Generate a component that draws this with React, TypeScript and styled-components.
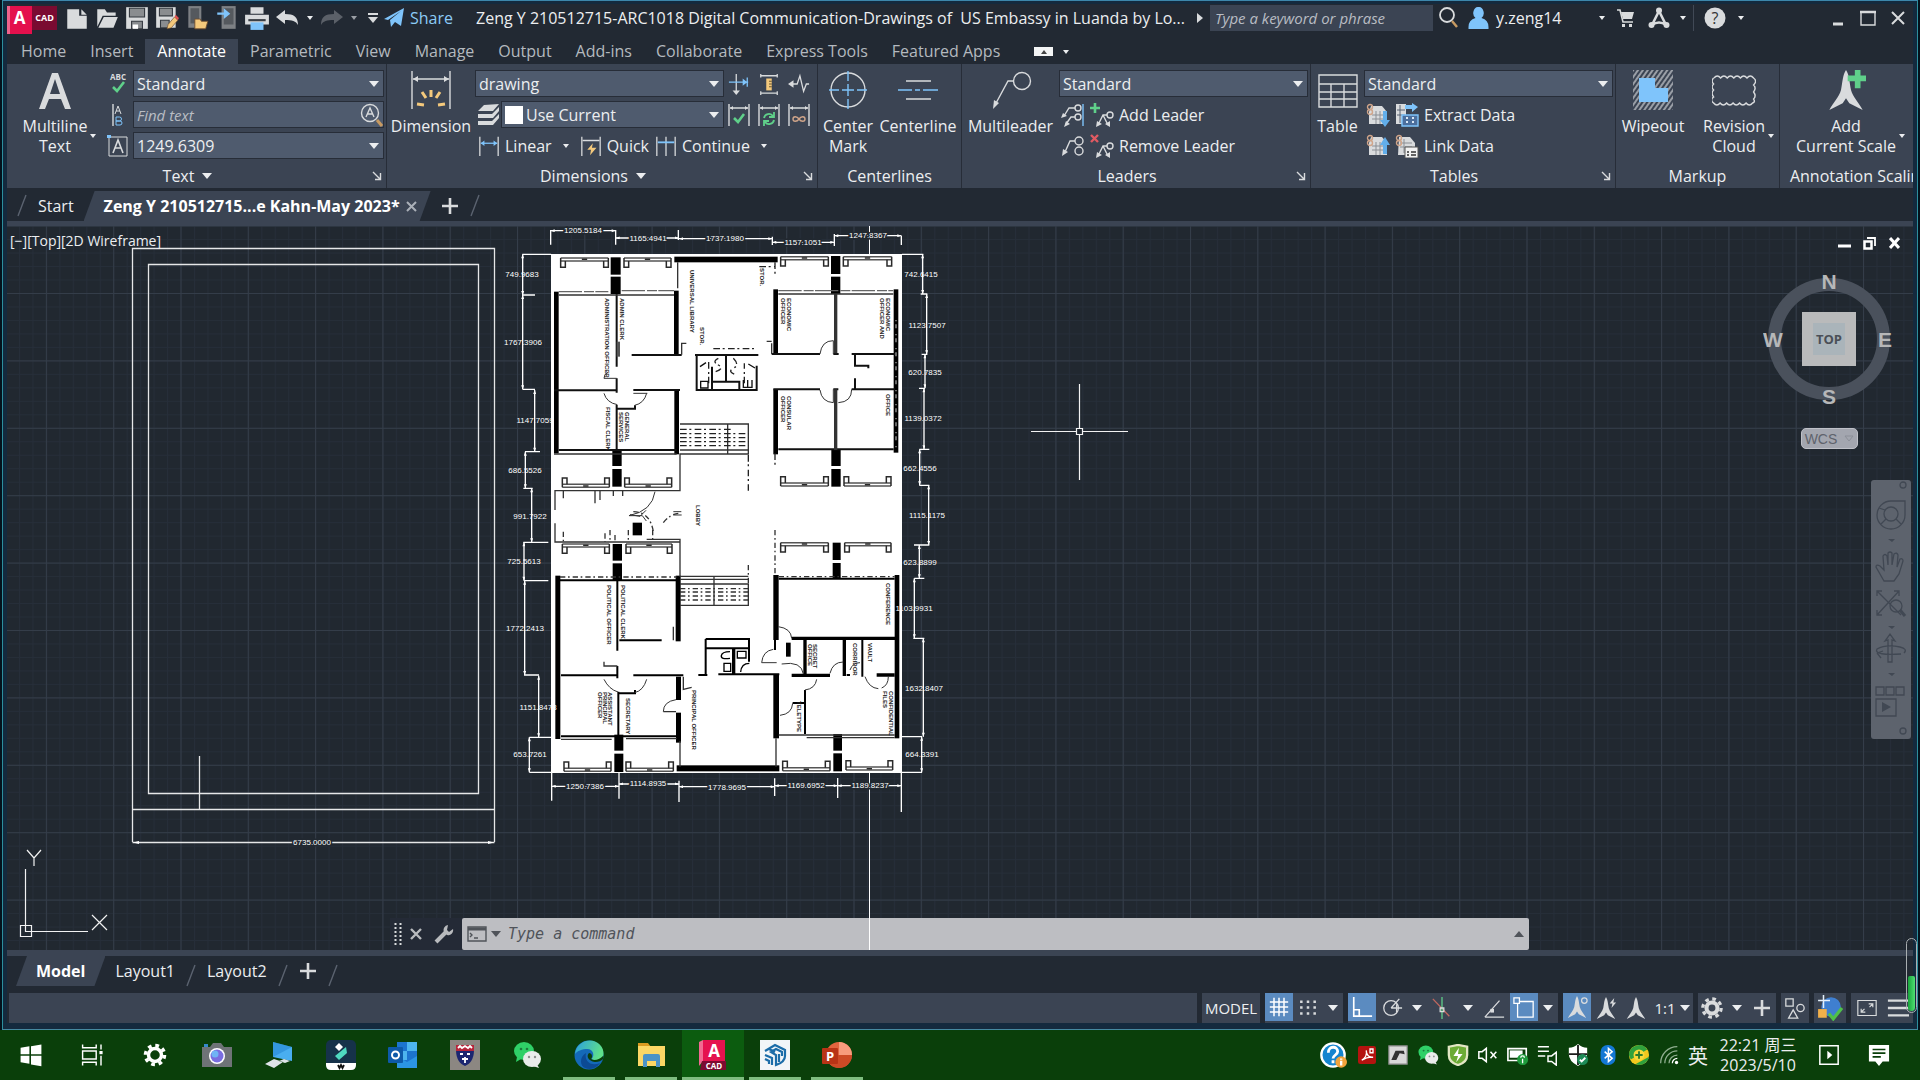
import React from "react";
import styled, { createGlobalStyle, css } from "styled-components";

const c = {
  dark: "#222933",
  panel: "#3b4453",
  field: "#4f5b6e",
  edge: "#272d38",
  text: "#eceef0",
  dim: "#b4b9bf",
  icon: "#d9dbdd",
  blue: "#7fc4fb",
  green: "#5fd08a",
  amber: "#f4c97c",
  task: "#0a3f0a",
};

const Global = createGlobalStyle`
  * { box-sizing: border-box; }
  html, body { margin: 0; background: #04121c; }
  body { font-family: "Open Sans", "Noto Sans", "Noto Sans CJK SC", sans-serif; font-size: 16px; color: ${c.text}; overflow: hidden; }
  button, select, input { font: inherit; color: inherit; border: 0; margin: 0; padding: 0; background: none; border-radius: 0; outline: none; }
`;

/* ---------- shell ---------- */
const Desktop = styled.div`
  display: flex;
  flex-direction: column;
  height: 100vh;
`;
const Window = styled.div`
  flex: 1;
  min-height: 0;
  display: flex;
  flex-direction: column;
  margin: 0 2px;
  padding: 3px 4px 6px;
  border: 1px solid #2c8f9e;
  border-top-color: #3d87ab;
  border-bottom-color: #4689a0;
  background: #142a3e;
`;
const Client = styled.div`
  flex: 1;
  min-height: 0;
  display: flex;
  flex-direction: column;
  background: ${c.dark};
  overflow: hidden;
`;
const Icon = styled.svg`
  display: block;
  flex: none;
  fill: none;
  stroke: ${c.icon};
  stroke-width: 1.4;
`;
const Caret = styled.span<{ $up?: boolean; $small?: boolean; $color?: string }>`
  flex: none;
  width: 0;
  height: 0;
  border: ${(p) => (p.$small ? 3 : 5)}px solid transparent;
  ${(p) =>
    p.$up
      ? css`border-top: 0; border-bottom: ${p.$small ? 4 : 6}px solid ${p.$color || c.text};`
      : css`border-bottom: 0; border-top: ${p.$small ? 4 : 6}px solid ${p.$color || c.text};`}
`;

/* ---------- title bar ---------- */
const TitleBar = styled.header`
  display: flex;
  align-items: center;
  height: 35px;
  padding-bottom: 8px;
  flex: none;
`;
const Slot = styled.button<{ $w?: number }>`
  display: flex;
  align-items: center;
  justify-content: center;
  flex: none;
  width: ${(p) => p.$w || 30}px;
  height: 26px;
`;
const AppBadge = styled.button`
  display: flex;
  align-items: center;
  width: 50px;
  height: 24px;
  margin-right: 5px;
  background: #7a0b31;
  flex: none;
`;
const BadgeA = styled.span`
  width: 25px;
  height: 28px;
  line-height: 24px;
  background: linear-gradient(90deg, #f0628b 3px, #e4104d 3px);
  color: #fff;
  font-weight: 700;
  font-size: 17px;
  text-align: center;
  align-self: flex-start;
`;
const BadgeCad = styled.span`
  flex: 1;
  font-size: 9px;
  font-weight: 700;
  color: #fff;
  text-align: center;
`;
const Share = styled.button`
  display: flex;
  align-items: center;
  gap: 6px;
  width: 74px;
  color: #8ccbf7;
  flex: none;
`;
const FileTitle = styled.h1`
  margin: 0 0 0 18px;
  flex: 1;
  min-width: 0;
  font-size: 16px;
  line-height: 24px;
  font-weight: 400;
  white-space: pre;
`;
const KeySearch = styled.input`
  width: 223px;
  height: 26px;
  padding: 0 5px;
  background: ${c.panel};
  font-size: 15px;
  font-style: italic;
  flex: none;
  &::placeholder { color: #b9bdc3; opacity: 1; }
`;
const User = styled.button`
  display: flex;
  align-items: center;
  gap: 7px;
  width: 136px;
  padding-left: 5px;
  flex: none;
`;
const Rule = styled.span`
  width: 1px;
  height: 26px;
  background: #414956;
`;
const TitleGap = styled.span`
  flex: 0 0 77px;
`;

/* ---------- ribbon ---------- */
const RibbonTabs = styled.nav`
  display: flex;
  height: 25px;
  flex: none;
  padding-left: 2px;
`;
const RibbonTab = styled.button<{ $on?: boolean }>`
  padding: 0 12px;
  height: 25px;
  line-height: 25px;
  color: ${(p) => (p.$on ? "#fff" : c.dim)};
  background: ${(p) => (p.$on ? c.panel : "none")};
`;
const TabMenu = styled.button`
  display: flex;
  align-items: center;
  gap: 10px;
  margin-left: 22px;
`;
const TabMenuBox = styled.span`
  width: 19px;
  height: 9px;
  display: grid;
  place-items: center;
  background: #f3f4f5;
`;
const Ribbon = styled.div`
  display: flex;
  height: 124px;
  flex: none;
  background: ${c.panel};
  overflow: hidden;
`;
const Panel = styled.section<{ $w: number }>`
  flex: 0 0 ${(p) => p.$w}px;
  display: flex;
  flex-direction: column;
  padding-top: 6px;
  border-right: 1px solid ${c.edge};
`;
const PanelBody = styled.div`
  display: flex;
  height: 95px;
`;
const PanelTitle = styled.h2`
  display: flex;
  align-items: center;
  margin: 0;
  height: 22px;
  font-size: 16px;
  font-weight: 400;
  white-space: nowrap;
`;
const TitleText = styled.span`
  flex: 1;
  display: flex;
  align-items: center;
  justify-content: center;
  gap: 8px;
`;
const Launcher = styled.button`
  width: 18px;
  display: grid;
  place-items: center;
`;
const Big = styled.button<{ $w: number }>`
  width: ${(p) => p.$w}px;
  height: 92px;
  display: flex;
  flex-direction: column;
  align-items: center;
  gap: 6px;
  flex: none;
  line-height: 20px;
`;
const BigText = styled.span<{ $menu?: boolean }>`
  display: flex;
  align-items: center;
  gap: 3px;
  padding-left: ${(p) => (p.$menu ? 9 : 0)}px;
  white-space: pre;
  text-align: center;
`;
const Rows = styled.div`
  display: flex;
  flex-direction: column;
  gap: 4px;
`;
const Row = styled.div`
  display: flex;
  align-items: center;
  height: 27px;
`;
const Field = styled.label<{ $w: number; $swatch?: boolean }>`
  position: relative;
  display: flex;
  align-items: center;
  width: ${(p) => p.$w}px;
  height: 27px;
  background: ${c.field};
  border: 1px solid ${c.edge};
  padding-left: ${(p) => (p.$swatch ? 3 : 0)}px;
  & > select, & > input { appearance: none; flex: 1; min-width: 0; height: 25px; padding: 0 3px; }
  & > input { font-size: 15px; font-style: italic; }
  & > input::placeholder { color: #b9bdc3; opacity: 1; }
`;
const FieldCaret = styled(Caret)`
  position: absolute;
  right: 4px;
  top: 10px;
  pointer-events: none;
`;
const Swatch = styled.span`
  width: 18px;
  height: 18px;
  background: #fff;
`;
const Tool = styled.button<{ $w?: number }>`
  display: flex;
  align-items: center;
  gap: 5px;
  height: 27px;
  width: ${(p) => (p.$w ? p.$w + "px" : "auto")};
  justify-content: ${(p) => (p.$w ? "center" : "flex-start")};
  padding: 0 ${(p) => (p.$w ? 0 : 3)}px;
  white-space: nowrap;
`;

/* ---------- tab strips ---------- */
const Strip = styled.nav<{ $h: number }>`
  display: flex;
  align-items: center;
  flex: none;
  height: ${(p) => p.$h}px;
  padding-left: 9px;
`;
const StripTab = styled.button<{ $on?: boolean; $bottom?: boolean }>`
  display: flex;
  align-items: center;
  gap: 6px;
  height: 30px;
  align-self: ${(p) => (p.$bottom ? "flex-start" : "flex-end")};
  padding: 0 10px;
  white-space: nowrap;
  ${(p) =>
    p.$on &&
    css`
      padding: 0 ${p.$bottom ? 20 : 14}px 0 20px;
      background: ${c.panel};
      color: #fff;
      font-weight: 700;
      clip-path: polygon(11px 0, 100% 0, calc(100% - 11px) 100%, 0 100%);
    `}
`;
const Slash = () => (
  <Icon width="12" height="24" viewBox="0 0 12 24">
    <path d="M2 23 10 2" stroke="#5b6370" />
  </Icon>
);
const Band = styled.div<{ $h: number }>`
  flex: none;
  height: ${(p) => p.$h}px;
  background: ${c.panel};
`;

/* ---------- canvas ---------- */
const Canvas = styled.main`
  position: relative;
  flex: 1;
  min-height: 0;
  overflow: hidden;
`;
const Scene = styled.svg`
  display: block;
  width: 100%;
  height: 100%;
`;
const ViewLabel = styled.div`
  position: absolute;
  left: 3px;
  top: 4px;
  font-size: 14px;
  line-height: 22px;
`;
const ViewButtons = styled.div`
  position: absolute;
  right: 6px;
  top: 4px;
  display: flex;
`;
const ViewCube = styled.div`
  position: absolute;
  right: 18px;
  top: 42px;
`;
const Wcs = styled.button`
  position: absolute;
  right: 55px;
  top: 202px;
  width: 57px;
  height: 21px;
  border-radius: 5px;
  background: #a3a6af;
  border: 1px solid #bfc1c8;
  color: #5f636c;
  font: 14px "Liberation Sans", Arial, sans-serif;
  display: flex;
  align-items: center;
  justify-content: center;
  gap: 7px;
`;
const NavBar = styled.div`
  position: absolute;
  right: 2px;
  top: 254px;
  width: 40px;
  height: 259px;
  border-radius: 3px;
  background: #5d636d;
`;
const CommandLine = styled.div`
  position: absolute;
  left: 383px;
  right: 384px;
  bottom: 0;
  height: 32px;
  display: flex;
  background: #242a36;
`;
const GuideOverlay = styled.span`
  position: absolute;
  left: 862px;
  bottom: 0;
  width: 1px;
  height: 32px;
  background: #fff;
  pointer-events: none;
`;
const CommandTools = styled.div`
  width: 72px;
  display: flex;
  align-items: center;
`;
const CommandField = styled.label`
  flex: 1;
  display: flex;
  align-items: center;
  gap: 4px;
  padding: 0 5px;
  border-radius: 2px;
  background: #bdbec2;
  & > input {
    flex: 1;
    padding-left: 3px;
    height: 30px;
    font: italic 15px "DejaVu Sans Mono", monospace;
  }
  & > input::placeholder { color: #50545a; opacity: 1; }
`;

/* ---------- status bar ---------- */
const Status = styled.footer`
  display: flex;
  gap: 5px;
  height: 30px;
  flex: none;
  padding-left: 2px;
`;
const StatusFill = styled.div`
  flex: 1;
  background: ${c.panel};
`;
const Group = styled.div`
  display: flex;
  background: ${c.panel};
`;
const SBtn = styled.button<{ $w: number; $on?: boolean }>`
  width: ${(p) => p.$w}px;
  height: ${(p) => (p.$on ? 28 : 30)}px;
  display: flex;
  align-items: center;
  justify-content: center;
  gap: 4px;
  font-size: 15px;
  background: ${(p) => (p.$on ? "#5b8bc0" : "none")};
`;
const Meter = styled.div`
  position: absolute;
  right: 3px;
  top: 938px;
  width: 11px;
  height: 75px;
  padding: 37px 1px 1px;
  border: 1px solid #a9aeb1;
  border-radius: 6px;
  z-index: 2;
`;
const MeterFill = styled.div`
  height: 100%;
  border-radius: 2px 2px 4px 4px;
  background: linear-gradient(90deg, #18a43b, #4fdf73);
`;

/* ---------- taskbar ---------- */
const Taskbar = styled.footer`
  display: flex;
  align-items: stretch;
  flex: none;
  height: 50px;
  background: ${c.task};
`;
const TaskApp = styled.button<{ $run?: boolean; $on?: boolean }>`
  width: 62px;
  display: grid;
  place-items: center;
  background: ${(p) => (p.$on ? "#0c5c0f" : "none")};
  ${(p) =>
    p.$run &&
    css`
      background-image: linear-gradient(#7fbd80, #7fbd80);
      background-size: ${p.$on ? "100%" : "52px"} 3px;
      background-position: bottom center;
      background-repeat: no-repeat;
    `}
`;
const Tray = styled.div`
  margin-left: auto;
  padding-right: 16px;
  display: flex;
  align-items: center;
`;
const TrayBtn = styled.button<{ $w?: number }>`
  width: ${(p) => p.$w || 30}px;
  height: 50px;
  display: grid;
  place-items: center;
  font-family: "Noto Sans CJK SC", sans-serif;
  font-size: 20px;
`;
const Clock = styled.button`
  width: 92px;
  text-align: center;
  font: 16px/20px "Open Sans", "Noto Sans CJK SC", sans-serif;
`;

/* ---------- small drawings ---------- */
const I = ({ s = 24, children }: { s?: number; children: React.ReactNode }) => (
  <Icon width={s} height={s} viewBox="0 0 24 24">{children}</Icon>
);
const F = { fill: c.icon, stroke: "none" };
const B = { fill: c.blue, stroke: "none" };

const NewIcon = () => <I s={26}><path {...F} d="M3 4h11v6h7v12H3zM16 4l5 5h-5z" /></I>;
const OpenIcon = () => <I s={26}><path {...F} d="M3 4h7l2 3h8v3H8L3 20zM9 11h13l-4 10H4z" /></I>;
const SaveIcon = () => <I s={26}><path {...F} d="M2 2h20v20H2z" /><path d="M5 3h14v8H5zM7 15h10v7H7z" fill="#8a8d90" stroke="#33383f" strokeWidth="1" /><path d="M8 18h5v4H8z" fill="#fff" stroke="none" /></I>;
const SaveAsIcon = () => <I s={26}><path {...F} d="M2 2h18v19H2z" /><path d="M5 3h12v7H5zM6 14h8v7H6z" fill="#8a8d90" stroke="#33383f" strokeWidth="1" /><path d="m12 22 1-4 6-7 3 3-6 7z" fill={c.amber} stroke="#6d4b2e" strokeWidth=".6" /><path d="m19 11 1-2 3 3-1 2z" fill="#e05252" stroke="none" /></I>;
const PhoneOpen = () => <I s={26}><path d="M4 1h12v20H4z" fill="#7d8084" stroke="none" /><path d="M6 3h8v14H6z" fill="#55595e" stroke="none" /><path d="M10 13h5l1 2h6l-2 7H10z" fill={c.amber} stroke="#6d4b2e" strokeWidth=".8" /></I>;
const PhoneIn = () => <I s={26}><path d="M7 1h13v21H7z" fill="#7d8084" stroke="none" /><path d="M9 3h9v15H9z" fill="#55595e" stroke="none" /><path {...B} d="M3 7h6V3l6 5-6 5V9H3z" /></I>;
const PrintIcon = () => <I s={26}><path {...F} d="M6 2h12v6H6zM1 9h22v9H1z" /><path d="M4 13h16v2H4z" fill="#3a3f46" stroke="none" /><path {...B} d="M6 16h12v7H6z" /></I>;
const Undo = ({ dull }: { dull?: boolean }) => (
  <Icon width="24" height="22" viewBox="0 0 24 22"><g transform={dull ? "matrix(-1 0 0 1 24 0)" : undefined}><path fill={dull ? "#5b6068" : c.icon} stroke="none" d="M1 10 10 3v4c9 0 13 3 13 11-2-4-6-5-13-5v4z" /></g></Icon>
);
const BigA = () => <Icon width="36" height="40" viewBox="0 0 36 40"><path fill={c.icon} stroke="none" fillRule="evenodd" d="M15 3h6l13 36h-6l-4-10H12L8 39H2zM18 9l-5 15h10z" /></Icon>;
const AbcCheck = () => <Icon width="24" height="24" viewBox="0 0 24 24"><text x="12" y="8" fontSize="8" fontWeight="700" textAnchor="middle" fill={c.icon} stroke="none">ABC</text><path d="m7 15 4 4 7-9" stroke={c.green} strokeWidth="2.6" /></Icon>;
const AlignAB = () => <I s={24}><path d="M7 1v22" /><path d="m9 11 3-8 3 8M10 8h4" strokeWidth="1" /><path d="M10 14h3.500a2 2 0 0 1 0 4H10zm0 4h4a2 2 0 0 1 0 4h-4z" stroke={c.blue} strokeWidth="1" /></I>;
const BoxA = () => <I s={24}><path d="M3 3h18v19H3z" strokeWidth="1" /><path d="m7 19 5-13 5 13M9 14h6" strokeWidth="1.600" /><path {...B} d="M1 1h4v3H1z" /></I>;
const FindA = () => <Icon width="26" height="26" viewBox="0 0 26 26"><circle cx="13" cy="11" r="8.500" /><path d="m9 15 4-9 4 9M10.500 12h5" /><path d="m20 18 5 6" stroke="#c79a62" strokeWidth="3" /></Icon>;
const DimBig = () => <Icon width="44" height="40" viewBox="0 0 44 40"><path d="M3 1v38M41 1v38M4 9h36" /><path {...F} d="m4 9 5-3v6zM40 9l-5-3v6z" /><path d="M22 20v7M13 22l4 6M31 22l-4 6M8 34l7 1M36 34l-7 1" stroke={c.amber} strokeWidth="3" /></Icon>;
const Layers = () => <I s={24}><path {...F} d="m8 2 15-1-6 7H2zM2 11h14l7-7v4l-6 7H2zM2 18h14l7-7v4l-6 7H2z" /></I>;
const LinearI = () => <I s={22}><path d="M2 2v21M22 2v21" /><path d="M3 9h18" stroke={c.blue} /><path {...B} d="m3 9 4-3v6zM21 9l-4-3v6z" /></I>;
const QuickI = () => <I s={22}><path d="M2 2v21M22 2v21M3 6h18" /><path fill={c.amber} stroke="none" d="m14 9-6 7h4l-1 6 7-8h-5z" /></I>;
const ContinueI = () => <I s={22}><path d="M2 2v21M12 2v21M22 2v21" /><path d="M3 8h18" stroke={c.blue} strokeWidth="2" /></I>;
const BreakI = () => <I s={22}><path d="M9 1v19" /><path d="M1 10h21M21 5v10" stroke={c.blue} /><path {...B} d="m21 10-5-4v8z" /><path {...F} d="m9 24-4-5h8z" /></I>;
const AdjustI = () => <I s={22}><path d="M3 3h18M3 22h18M3 1v4M21 1v4M3 20v4M21 20v4" /><path d="M9 6h6v13H9z" fill={c.amber} stroke="none" /><path d="M12 9h3M12 12h3M12 15h3" stroke="#5a4a2a" strokeWidth="1" /></I>;
const JogI = () => <I s={22}><path d="M3 12h7l3-9 4 17 3-8h3" /><path {...F} d="m0 12 6-4v8z" /></I>;
const UnderDim = ({ children }: { children: React.ReactNode }) => <I s={24}><path d="M2 1v22M22 1v22M3 5h18" /><path {...F} d="m3 5 3-2v4zM21 5l-3-2v4z" />{children}</I>;
const CenterMarkI = () => <Icon width="42" height="40" viewBox="0 0 42 40"><circle cx="21" cy="20" r="17" /><path d="M2 20h10m3 0h12m3 0h10M21 1v10m0 3v12m0 3v10" stroke={c.blue} /></Icon>;
const CenterlineI = () => <Icon width="42" height="40" viewBox="0 0 42 40"><path d="M9 11h25M9 29h25" /><path d="M1 20h14m3 0h5m3 0h15" stroke={c.blue} /></Icon>;
const MultiI = () => <Icon width="44" height="40" viewBox="0 0 44 40"><circle cx="33" cy="11" r="8.500" /><path d="M24 11h-5L6 35" /><path {...F} d="m4 39 1-9 5 3z" /></Icon>;
const LeadAlign = () => <I s={24}><circle cx="17" cy="5" r="3" /><circle cx="17" cy="14" r="3" /><path d="M14 5H8l-5 8M14 14h-4l-5 7" /><path {...F} d="m0 15 2-5 4 3zM3 24l2-6 4 3z" /><path d="M22 1v22" stroke={c.blue} /></I>;
const LeadAdd = ({ del }: { del?: boolean }) => <I s={24}><circle cx="20" cy="12" r="3" /><path d="M17 12h-4l-5 10M13 12l5 10" /><path {...F} d="m6 24 1-6 5 3zM20 24l-5-3 5-3z" />{del ? <path d="m1 1 7 7m0-7L1 8" stroke="#e05a62" strokeWidth="2.400" /> : <path d="M5 0v10M0 5h10" stroke={c.green} strokeWidth="2.600" />}</I>;
const LeadCollect = () => <I s={24}><circle cx="18" cy="7" r="4" /><circle cx="18" cy="17" r="4" /><path d="M14 7H9L4 18" /><path {...F} d="m1 22 1-7 5 3z" /></I>;
const TableI = () => <Icon width="40" height="40" viewBox="0 0 40 40"><path d="M1 5h38v32H1zM1 14h38M1 22h38M1 29h38M13 14v23M26 14v23" /></Icon>;
const SheetI = ({ up }: { up?: boolean }) => <I s={24}><path {...F} d="M5 3h11l5 6v12H3V9z" /><path d="M6 12h12M6 16h12M10 8v13M14 8v13" stroke="#8b8f95" strokeWidth="1" /><circle cx="4" cy="4" r="2.500" stroke="#d0a58a" /><circle cx="4" cy="9" r="2.500" stroke="#d0a58a" /><path fill="#62aeea" stroke="none" d={up ? "M17 20v-9h-3l5-8 5 8h-3v9z" : "M17 8v9h-3l5 7 5-7h-3V8z"} /></I>;
const ExtractI = () => <I s={24}><path {...F} d="M1 1h10v20H1z" /><path d="M2 7h8M2 12h8M5 2v18" stroke="#596373" strokeWidth="1" /><path {...B} d="M10 2h7V0l6 4-6 5V6h-7z" /><path d="M7 12h16v11H7z" fill="#4c6f9d" stroke={c.blue} /><path d="M12 14v7M18 14v7" stroke="#dbe9f7" strokeDasharray="2 2" strokeWidth="2" /></I>;
const LinkDataI = () => <I s={24}><path {...F} d="M4 3h11l5 6v12H3z" /><path d="M5 9h12M5 13h12M9 5v14" stroke="#8b8f95" strokeWidth="1" /><circle cx="4" cy="4" r="2.500" stroke="#d0a58a" /><circle cx="4" cy="9" r="2.500" stroke="#d0a58a" /><path d="M10 13h13v11H10z" fill="#f2f2f2" stroke="#555" strokeWidth="1" /><path d="M12 18h2m2 0h5m-9 3h2m2 0h5" stroke="#333" /></I>;
const WipeI = () => <Icon width="42" height="40" viewBox="0 0 42 40"><defs><pattern id="hatch" width="4" height="4" patternUnits="userSpaceOnUse" patternTransform="rotate(35)"><path d="M1 0v4" stroke={c.icon} strokeWidth="1.200" /></pattern></defs><path d="M1 0h40v40H1z" fill="url(#hatch)" stroke="none" /><path {...B} d="M7 8h16v10h13v14H7z" /></Icon>;
const CloudI = () => {
  const h = Array(6).fill("q3.300 -4 6.600 0").join(" ");
  return <Icon width="44" height="40" viewBox="0 0 44 40"><path d={`M2 8${h}q4 3 0 7q3 3 0 7q3 4 0 7q2 3 -1 4${Array(6).fill("q-3.300 4 -6.500 0").join(" ")}q-4 -3 0 -6q-3 -4 0 -7q-3 -3 0 -6q-3 -3 0 -6`} /></Icon>;
};
const AScale = ({ s = 24, extra }: { s?: number; extra?: React.ReactNode }) => <I s={s}><path {...F} d="M12 0c2 3 2 7 3 12 1 4 5 8 7 12l-8-4-2-3-2 3-8 4c2-4 6-8 7-12 1-5 1-9 3-12z" />{extra}</I>;
const LaunchI = () => <Icon width="10" height="10" viewBox="0 0 10 10"><path d="m1 1 7 7M3 8.500h5.500V2" /></Icon>;
const PlusI = () => <Icon width="18" height="18" viewBox="0 0 18 18"><path d="M9 1v16M1 9h16" strokeWidth="2.600" /></Icon>;

/* ---------- floor plan ---------- */
type R4 = [number, number, number, number];
const Rects = ({ d }: { d: R4[] }) => <>{d.map((r, i) => <rect key={i} x={r[0]} y={r[1]} width={r[2]} height={r[3]} />)}</>;
const Sill = ({ x, e, y, up }: { x: number; e: number; y: number; up?: boolean }) => {
  const s = up ? -1 : 1;
  return (
    <g fill="none" stroke="#2a2a2a" strokeWidth="4.500">
      <path d={`M${x} ${y}H${e}M${x} ${y + 9 * s}H${e}`} stroke="#555" />
      <path d={`M${x} ${y}v${28 * s}h14v${-19 * s}M${e} ${y}v${28 * s}h-14v${-19 * s}M${(x + e) / 2 - 8} ${y + 4 * s}h16`} />
    </g>
  );
};
const arrows = { markerStart: "url(#tip)", markerEnd: "url(#tip)" };
const Dims = ({ d }: { d: R4[] }) => <>{d.map((l, i) => <path key={i} d={`M${l[0]} ${l[1]}L${l[2]} ${l[3]}`} {...arrows} />)}</>;

const labels: [number, number, string, number?][] = [
  [583, 230, "1205.5184", 1], [648, 238, "1165.4941", 1], [725, 238, "1737.1980", 1], [803, 242, "1157.1051", 1], [868, 235, "1247.8367", 1],
  [522, 274, "749.9683"], [523, 342, "1767.3906"], [535, 420, "1147.7059"], [525, 470, "686.5526"], [530, 516, "991.7922"],
  [524, 561, "725.5613"], [525, 628, "1772.2413"], [538, 707, "1151.8473"], [530, 754, "653.7261"],
  [921, 274, "742.6415"], [927, 325, "1123.7507"], [925, 372, "620.7835"], [923, 418, "1139.0372"], [920, 468, "662.4556"],
  [927, 515, "1115.1175"], [920, 562, "623.8899"], [914, 608, "1103.9931"], [924, 688, "1632.8407"], [922, 754, "664.3391"],
  [585, 786, "1250.7386", 1], [648, 783, "1114.8935", 1], [727, 787, "1778.9695", 1], [806, 785, "1169.6952", 1], [870, 785, "1189.8237", 1],
  [312, 842, "6735.0000", 1],
];
const rooms: [number, number, string][] = [
  [690, 270, "UNIVERSAL LIBRARY"], [760, 268, "STOR."], [700, 327, "STOR."], [605, 298, "ADMINISTRATION OFFICER"], [620, 298, "ADMIN CLERK"],
  [787, 298, "ECONOMIC"], [781, 298, "OFFICER"], [886, 298, "ECONOMIC"], [880, 298, "OFFICER AND"], [606, 407, "FISCAL CLERK"], [625, 412, "GENERAL"], [619, 412, "SERVICES"],
  [787, 396, "CONSULAR"], [781, 396, "OFFICER"], [886, 394, "OFFICE"], [696, 505, "LOBBY"], [607, 585, "POLITICAL OFFICER"], [621, 585, "POLITICAL CLERK"],
  [886, 583, "CONFERENCE"], [692, 690, "PRINCIPAL OFFICER"], [608, 692, "ASSISTANT"], [603, 692, "PRINCIPAL"], [598, 692, "OFFICER"], [626, 698, "SECRETARY"],
  [813, 644, "SECRET"], [808, 644, "OFFICE"], [853, 643, "CORRIDOR"], [868, 643, "VAULT"], [889, 691, "CONFIDENTIAL"], [883, 691, "FILES"], [797, 701, "TELETYPE"],
];

const Plan = () => (
  <>
    <rect x="551" y="254" width="351" height="519" fill="#fff" />
    <g transform="translate(500 220) scale(.33333)" fill="#000">
      <Rects d={[[332, 112, 30, 52], [332, 170, 30, 52], [337, 688, 28, 50], [337, 747, 28, 53], [993, 108, 28, 54], [993, 170, 28, 52], [994, 688, 28, 50], [994, 747, 28, 53], [523, 110, 310, 17], [162, 215, 14, 485], [522, 212, 14, 192], [523, 508, 14, 195], [820, 208, 14, 195], [820, 508, 14, 195], [1181, 208, 14, 490]]} />
      <path d="M1188 300v390" stroke="#999" strokeWidth="4" strokeDasharray="4 9 12 17" />
      <g fill="none" stroke="#111" strokeWidth="6">
        <path d="M162 511H350M350 222V440M350 475V518M395 405H545M400 510H540M176 690H530M350 555V690M350 566H405V556M590 405V510H770V437M585 405H775M678 405V485M636 440V510M636 485H718V510M835 402H960M815 402H835M1000 402H1016M1055 402H1185M1065 402V437H1105V445M1065 475V508M820 508H960M1000 508H1015M1055 508H1185M835 688H1181" />
        <path d="M1007 222V400M1007 508V690" strokeWidth="10" stroke="#333" />
        <path d="M355 365V410" strokeWidth="10" stroke="#555" />
        <path d="M176 215H325M365 212H522M835 212H1180" stroke="#666" strokeWidth="4" strokeDasharray="70 6 30 4" />
        <path d="M176 225H522M835 222H1180M162 702H530M540 612H745V702H540M683 612V700M540 690H745M533 127V205M540 700V812H165V870M190 812V835M285 812V850M300 812V840M340 810V828M368 810V828M545 404V370h14M815 370V402M800 364H815" strokeWidth="4" stroke="#333" />
        <path d="M540 628H700M540 641H745M540 653H745M540 665H745M540 677H745M640 386H770M745 705V812M825 127V165M778 140H825M825 700V735M655 415q-20 10 0 20t-8 20M700 415q20 20 0 30t10 20M733 490V430M626 490V420" strokeWidth="4" stroke="#222" strokeDasharray="20 8 6 10" />
        <path d="M960 402q5-40 40-40v40M960 510q5 36 40 38V508M1055 508q0 38-40 40M312 520q8 28 40 34M440 520q-8 30-36 36M350 475H312q0-14 12-18M400 520h42M465 815q-8 58-78 72h40l12 16M520 885h25" strokeWidth="3" stroke="#333" />
        <path d="M602 484h22v20h-22zM730 480v22h26v-22M743 480v22M600 440l18-12M745 432l20 12" strokeWidth="4" />
      </g>
      <Sill x={182} e={325} y={114} /><Sill x={372} e={513} y={114} /><Sill x={842} e={985} y={110} /><Sill x={1030} e={1175} y={110} />
      <Sill x={187} e={328} y={802} up /><Sill x={374} e={515} y={802} up /><Sill x={842} e={985} y={798} up /><Sill x={1032} e={1173} y={798} up />
    </g>
    <g transform="translate(500 510) scale(.33333)" fill="#000">
      <Rects d={[[338, 102, 28, 50], [338, 160, 28, 50], [998, 98, 24, 52], [998, 159, 24, 48], [343, 674, 27, 48], [343, 731, 27, 55], [1000, 672, 26, 50], [1000, 730, 26, 54], [166, 197, 15, 490], [527, 197, 15, 197], [528, 500, 15, 70], [528, 608, 15, 90], [820, 195, 16, 195], [820, 495, 17, 190], [1184, 195, 14, 490], [530, 766, 308, 18], [398, 38, 28, 38], [858, 398, 14, 42]]} />
      <g fill="none" stroke="#000" strokeWidth="7">
        <path d="M180 211H530M352 211V422M352 468V505M358 391H485M183 496H352M400 496H550M595 495H622M655 493H838M355 545V680M355 550H405V540M617 387H747V455M617 387V495M617 415H747M836 206H1184M1087 385V500M915 540V672M878 579H915M1040 495H1050M825 390V420M183 679H530" strokeWidth="6" />
        <path d="M875 385H1195M915 385V498M1033 385V498M875 496H990M1130 495H1184M701 415V495" strokeWidth="10" />
        <path d="M165 40V96H540M440 88H540V200M540 222H745V286H540M540 199H745M540 208H745M642 197V287M836 675H1184M183 688H335M378 686H530M920 683H1184M540 693V770M828 685V770M520 350V391M352 468H312V455M550 500V538l25-6M490 605H528" strokeWidth="4" stroke="#333" />
        <path d="M190 65V96M315 70V96M330 60V96M345 75V96M385 60V96M745 165V222M825 60V195M540 236H745M540 246H745M540 258H745M540 270H745M836 200H1184M180 201H530M490 38q20-25 45-28M458 60V88M400 5q50 0 60 60" strokeWidth="4" stroke="#333" strokeDasharray="16 8 5 9" />
        <path d="M820 418q-32 5-35 40H830M835 350q38 5 40 35M840 616q36-4 38-36M990 490q8-34 40-34M1095 500q12 34 40 36M1165 500q0 26-20 34M312 508q15 30 42 38M440 508q-10 34-36 40M490 605q0-30 38-36M950 508q-4 28-35 32M845 462q60-10 65 30M1050 480q8-22 30-22M390 14l30 5 18-18M520 5h24" strokeWidth="3" stroke="#333" />
        <path d="M672 460h20v24h-20zM690 425q-24 0-26 12t26 8M712 424h26v20h-26zM748 460q-24 0-26 26" strokeWidth="4" />
      </g>
      <Sill x={187} e={328} y={102} /><Sill x={378} e={516} y={102} /><Sill x={842} e={985} y={98} /><Sill x={1034} e={1173} y={98} />
      <Sill x={192} e={333} y={784} up /><Sill x={378} e={520} y={784} up /><Sill x={848} e={990} y={782} up /><Sill x={1038} e={1178} y={780} up />
    </g>
    <g fill="#222" fontSize="6" fontWeight="700" fontFamily="Liberation Sans, Arial, sans-serif">
      {rooms.map(([x, y, t], i) => <text key={i} transform={`translate(${x} ${y}) rotate(90)`}>{t}</text>)}
    </g>
    <g transform="translate(500 220) scale(.33333)" fill="none" stroke="#fff" strokeWidth="4">
      <path d="M152 30V74M347 30V74M535 30V60M817 50V75M1003 42V78M1204 47V75M67 103H153M67 225H105M68 508H105M75 695H120M70 805H98M1206 103H1270M1262 222H1282M1265 403H1282M1257 505H1275M1258 688H1288M1258 796H1288" />
      <Dims d={[[152, 32, 347, 32], [347, 54, 537, 54], [537, 56, 817, 56], [817, 67, 1003, 67], [1003, 47, 1204, 47], [68, 103, 68, 225], [68, 225, 68, 508], [104, 510, 104, 695], [76, 695, 76, 805], [95, 805, 95, 967], [1268, 103, 1268, 222], [1280, 222, 1280, 403], [1275, 403, 1275, 505], [1272, 505, 1272, 688], [1259, 688, 1259, 796], [1286, 796, 1286, 975]]} />
    </g>
    <g transform="translate(500 510) scale(.33333)" fill="none" stroke="#fff" strokeWidth="4">
      <path d="M70 97H145M72 212H145M72 495H117M88 682H155M88 787H155M1242 105H1288M1243 205H1273M1240 385H1273M1206 680H1266M1206 787H1266M155 787V872M357 787V866M537 812V876M824 805V858M1013 804V864M1204 787V906" />
      <Dims d={[[72, 97, 72, 212], [74, 212, 74, 495], [116, 497, 116, 682], [88, 682, 88, 787], [1258, 105, 1258, 205], [1243, 205, 1243, 385], [1270, 385, 1270, 680], [1265, 680, 1265, 787], [155, 829, 357, 829], [357, 822, 537, 822], [537, 830, 824, 830], [824, 827, 1013, 827], [1013, 827, 1204, 827]]} />
    </g>
  </>
);

const Drawing = () => (
  <Scene role="img" aria-label="Embassy floor plan">
    <defs>
      <pattern id="minor" x="517" y="293" width="13.460" height="13.480" patternUnits="userSpaceOnUse"><path d="M0 .5H13.460M.5 0V13.480" stroke="#262e39" fill="none" /></pattern>
      <pattern id="major" x="517" y="293" width="67.300" height="67.400" patternUnits="userSpaceOnUse"><path d="M0 .5H67.300M.5 0V67.400" stroke="#343d49" fill="none" /></pattern>
      <marker id="tip" viewBox="0 0 8 6" refX="8" refY="3" markerWidth="18" markerHeight="9" markerUnits="userSpaceOnUse" orient="auto-start-reverse"><path d="M0 0 8 3 0 6z" fill="#fff" /></marker>
    </defs>
    <g transform="translate(-7 -226)">
      <rect x="7" y="226" width="4000" height="3000" fill="#212830" />
      <rect x="7" y="226" width="4000" height="3000" fill="url(#minor)" />
      <rect x="7" y="226" width="4000" height="3000" fill="url(#major)" />
      <g fill="none" stroke="#e6e7e8" strokeWidth="1.300">
        <path d="M132.500 842V248.500H494.500V842M132.500 809.500H494.500M148.500 264.500H478.500V793.500H148.500zM199.500 756V810" />
        <path d="M132.500 842.500H494.500" />
        <path fill="#fff" stroke="none" d="m133 842.500 6-1.500v3zM494 842.500l-6-1.500v3z" />
      </g>
      <Plan />
      <path d="M869.500 226V254M869.500 773V950" stroke="#fff" />
      <g fontFamily="Liberation Sans, Arial, sans-serif" fontSize="8" fill="#fff" textAnchor="middle">
        {labels.map(([x, y, t, halo]) => (
          <text key={t} x={x} y={y + 3} stroke={halo ? "#212830" : "none"} strokeWidth="3" paintOrder="stroke">{t}</text>
        ))}
      </g>
      <g fill="none" stroke="#f2f2f2" strokeWidth="1.200">
        <path d="M1031 431.500H1076M1083 431.500H1128M1079.500 384V428M1079.500 435V480M1076.500 428.500h6v6h-6z" />
        <path d="M25.500 869V931.500H88M20.500 925.500h11v11h-11zM27 850l7 8 7-8M34 858v8M92 915l15 15M107 915 92 930" />
      </g>
    </g>
  </Scene>
);

const Compass = () => (
  <Icon width="132" height="142" viewBox="0 0 132 142">
    <circle cx="66" cy="71" r="54.500" stroke="#4a515c" strokeWidth="13" />
    <path d="M39 44h54v54H39z" fill="#b9babb" stroke="none" />
    <path d="M50 55h32v32H50z" fill="#aab4ba" stroke="none" />
    <text x="66" y="76" fontSize="13" fontWeight="700" textAnchor="middle" fill="#4a4f57" stroke="none">TOP</text>
    <g fontFamily="Liberation Sans, Arial, sans-serif" fontSize="21" fontWeight="700" textAnchor="middle" fill="#b6b7b8" stroke="none">
      <text x="66" y="21">N</text><text x="10" y="79">W</text><text x="122" y="79">E</text><text x="66" y="136">S</text>
    </g>
  </Icon>
);
const NavIcons = () => (
  <Icon width="40" height="259" viewBox="0 0 40 259">
    <g stroke="#414853" strokeWidth="1.300">
      <circle cx="32" cy="5" r="3" /><circle cx="32" cy="251" r="3" />
      <path d="M20 21h14v14a14 14 0 1 1-14-14z" /><circle cx="20" cy="34" r="7" /><path d="m10 44 5-5M30 44l-5-5M8 28l6 2" />
      <path d="M13 101 5 87q0-3 4-1l4 4-1-14q2-3 4 0l1 9V73q2-2 4 0v12l2-11q3-2 4 1l-1 12 3-8q3-1 3 2l-4 13-5 7z" />
      <path d="m6 111 24 24M6 135l22-24M6 116v-5h5M23 111h5v5M6 130v5h5" /><circle cx="25" cy="126" r="6" /><path d="m29 130 5 6" strokeWidth="3" />
      <path d="M17 182v-22l-3 1 5-7 5 7-3-1v22zM33 173q4-4-4-6-14-3-23 2c-3 5 8 6 24 5M6 173l6-2M10 178l-4-5" />
      <path d="M5 207h8v8H5zM15 207h8v8h-8zM25 207h8v8h-8zM5 219h20v17H5z" />
    </g>
    <path d="m11 222 9 5-9 5zM17 59h7l-3 3zM17 146h7l-3 3zM17 193h7l-3 3z" fill="#414853" stroke="none" />
  </Icon>
);

/* ---------- taskbar drawings ---------- */
const T = ({ children, w = 30, h = 30 }: { children: React.ReactNode; w?: number; h?: number }) => (
  <Icon width={w} height={h} viewBox="0 0 30 30" strokeWidth="0">{children}</Icon>
);
const N = { stroke: "none" };
const Wechat = () => <><ellipse {...N} cx="12" cy="11" rx="10" ry="9" fill="#2fd067" /><path {...N} fill="#2fd067" d="m5 17-1 5 5-3z" /><ellipse {...N} cx="20" cy="19" rx="9" ry="8" fill="#e9ebea" /><path {...N} fill="#e9ebea" d="m25 24 2 4-6-2z" /><g {...N} fill="#1d7a3d"><circle cx="9" cy="9" r="1.300" /><circle cx="15" cy="9" r="1.300" /></g><g {...N} fill="#8b8e8c"><circle cx="17" cy="17" r="1.200" /><circle cx="23" cy="17" r="1.200" /></g></>;
const apps: { n: string; run?: boolean; on?: boolean; d: React.ReactNode }[] = [
  { n: "Start", d: <T w={24} h={24}><path {...N} fill="#fff" d="M2 6l11-2v10H2zM15 4l13-2v12H15zM2 16h11v10L2 24zM15 16h13v13l-13-2z" /></T> },
  { n: "Task view", d: <T w={24} h={24}><path stroke="#fff" strokeWidth="1.800" d="M2 2v4h17V2M2 28v-4h17v4M2 10h17v10H2zM25 2v6M25 16v12" /><path {...N} fill="#fff" d="M23 10h4v4h-4z" /></T> },
  { n: "Settings", d: <T w={26} h={26}><circle cx="15" cy="15" r="7.500" stroke="#fff" strokeWidth="4" /><circle cx="15" cy="15" r="11" stroke="#fff" strokeWidth="4" strokeDasharray="4.300 4.340" /></T> },
  { n: "Camera", d: <T><path {...N} fill="#6f7377" d="M0 7h8l3-4h8l3 4h8v20H0z" /><path {...N} fill="#3689c9" d="M2 4h4v3H2z" /><circle {...N} cx="15" cy="16" r="8" fill="#fff" /><circle {...N} cx="15" cy="16" r="6.500" fill="#7a6de0" /><circle {...N} cx="13" cy="14" r="3.500" fill="#6fb4f5" /></T> },
  { n: "Remote desktop", d: <T><path {...N} fill="#49aef0" d="m9 2 19 5v14L9 17z" /><path {...N} fill="#1f7fce" d="m9 2 19 5L9 17z" opacity=".5" /><path {...N} fill="#dfe4e8" d="M1 24 10 19l9 3-9 6zM15 21l6 2 5-2-6-2z" /></T> },
  { n: "Filmora", d: <T><rect {...N} width="30" height="30" rx="5" fill="#16324a" /><path {...N} fill="#fff" d="m13 3 4 4-4 4-4-4z" /><path {...N} fill="#4fd9c0" d="m20 7 1 6-8 7-4-4z" /><path {...N} fill="#fff" d="M0 23h30v2q0 5-5 5H5q-5 0-5-5z" /><path stroke="#111" strokeWidth="1.800" d="m12 25 1.500 3 1.500-3 1.500 3 1.500-3" /></T> },
  { n: "Outlook", d: <T><path {...N} fill="#1c74cf" d="M9 2h20v26H9z" /><path {...N} fill="#4db5ef" d="M19 2h10v9H19zM9 11h10v9H9z" /><path {...N} fill="#2b95e4" d="m9 16 10 6 10-6v12H9z" /><rect {...N} x="0" y="7" width="15" height="16" rx="1" fill="#0e5aa9" /><circle cx="7.500" cy="15" r="3.500" stroke="#fff" strokeWidth="2" /></T> },
  { n: "University", d: <T><path {...N} fill="#8c8782" d="M0 0h30v30H0z" /><path {...N} fill="#1c2670" d="M6 10h18c0 9-4 14-9 16-5-2-9-7-9-16z" /><path {...N} fill="#b7243a" d="M6 5h18v6H6z" /><path stroke="#fff" strokeWidth="1.800" d="M8 8l2-2 2 2 3-2 3 2 2-2 2 2M10 14h3m4 0h3M15 17v6M12 19h6" /></T> },
  { n: "WeChat", d: <T w={32} h={30}><Wechat /></T> },
  { n: "Edge", run: true, d: <T><defs><linearGradient id="eg" x2="1" y2=".3"><stop stopColor="#2a9de0" /><stop offset="1" stopColor="#5fe08a" /></linearGradient></defs><circle {...N} cx="15" cy="15" r="14.500" fill="#1469b8" /><path {...N} fill="url(#eg)" d="M1 14C2 5 9 .5 16 .5 24 .5 30 7 29.500 14c0 6-8 8-12 5 4-4 1-10-4-10C8 9 3 11 1 14z" /><path {...N} fill="#0c4a94" d="M12 13c-2 8 5 14 14 10-4 6-10 7-15 5s-6-11 1-15z" /><path {...N} fill={c.task} d="M15 13c-3 3-1 8 6 9 4 0 6-1 8-3v-3c-4 4-9 5-12 3 2-2 1-6-2-6z" /></T> },
  { n: "Explorer", run: true, d: <T><path {...N} fill="#d99b21" d="M2 3h10l3 4H2z" /><path {...N} fill="#fbd765" d="M2 6h27v20H2z" /><path {...N} fill="#4b93c7" d="M7 16q0-2 2-2h13q2 0 2 2v11h-4v-6h-9v6H7z" /></T> },
  { n: "AutoCAD", run: true, on: true, d: <T><path {...N} fill="#e5124f" d="M5 0h22v22H5z" /><path {...N} fill="#f26a92" d="M1 2 5 0v21l-4 5z" /><path {...N} fill="#7c0b31" d="M4 21h24v9H2z" /><text x="16" y="17" fontSize="17" fontWeight="700" textAnchor="middle" fill="#fff" stroke="none">A</text><text x="16" y="29" fontSize="8" fontWeight="700" textAnchor="middle" fill="#fff" stroke="none">CAD</text></T> },
  { n: "SketchUp", run: true, d: <T><path {...N} fill="#f2f5f8" d="M0 0h30v30H0z" /><g stroke="#1b6ca8" strokeWidth="2.200"><path d="M5 11 15 5l10 5v6q0 6-9 9V15l-5-3 5-3 6 3v4M5 15l7 3v7M5 19l4 2v3M19 14v8M9 9l6 3" /></g></T> },
  { n: "PowerPoint", run: true, d: <T><circle {...N} cx="17" cy="15" r="13" fill="#e2653f" /><path {...N} fill="#f79b7d" d="M17 2a13 13 0 0 1 13 13H17z" /><path {...N} fill="#c43e1c" d="M4 15h26a13 13 0 0 1-26 0z" opacity=".7" /><rect {...N} x="0" y="8" width="16" height="16" rx="1" fill="#b83416" /><text x="8" y="21" fontSize="13" fontWeight="700" textAnchor="middle" fill="#fff" stroke="none">P</text></T> },
];
const tray: { n: string; w: number; d: React.ReactNode }[] = [
  { n: "Help", w: 36, d: <I s={28}><circle cx="12" cy="12" r="10" fill="#1484cf" stroke="#fff" strokeWidth="2" /><path d="M8 10c0-6 8-6 8-1 0 3-4 3-4 6m0 1.500V19" stroke="#fff" strokeWidth="2.400" /><circle {...N} cx="19" cy="18" r="5" fill="#f2a33b" /><path d="M19 15v1m0 1v4" stroke="#fff" strokeWidth="2" /></I> },
  { n: "PDF", w: 31, d: <I s={18}><rect {...N} width="24" height="24" rx="3" fill="#b4130f" /><path stroke="#fff" strokeWidth="1.800" d="M5 19c6-4 7-9 6-13 0 6 4 10 9 9-5-1-10 1-15 4zM16 4h4v5h-4z" /></I> },
  { n: "Drive", w: 31, d: <I s={20}><path fill="#d9d9d9" stroke="#888" d="M1 1h22v22H1z" /><path {...N} fill="#333" d="M4 18 9 7h10l1 4-6-1-4 8z" /></I> },
  { n: "WeChat", w: 30, d: <Icon width="22" height="22" viewBox="0 0 30 30"><Wechat /></Icon> },
  { n: "Security", w: 30, d: <I s={22}><path fill="#6cab35" stroke="#e3e6c5" strokeWidth="2.500" d="M2 3 12 1l10 2v9q0 8-10 11Q2 20 2 12z" /><path {...N} fill="#fff" d="m13 4-6 9h5l-2 7 7-9h-5z" /></I> },
  { n: "Volume", w: 30, d: <I s={20}><path stroke="#fff" d="M1 8v8h4l5 4V4L5 8zM15 8l7 8m0-8-7 8" strokeWidth="1.800" /></I> },
  { n: "Network", w: 30, d: <I s={22}><path stroke="#fff" strokeWidth="1.800" d="M1 5h20v13H1z" /><path {...N} fill="#fff" d="M3 7h14v8H3z" /><circle {...N} cx="17" cy="17" r="6" fill="#1f9a3c" /><path stroke="#fff" d="M17 21v-5m-2-1a2 2 0 1 1 4 0" /></I> },
  { n: "Audio", w: 30, d: <I s={22}><path stroke="#fff" strokeWidth="1.600" d="M1 3h12M1 8h12M1 13h8M12 13v6h4l5 4V9l-5 4z" /></I> },
  { n: "Defender", w: 30, d: <I s={22}><path {...N} fill="#fff" d="M2 4q6 0 10-4 4 4 10 4v7q0 8-10 13Q2 19 2 11z" /><path stroke="#1b1b1b" strokeWidth="2" d="M12 1v22M2 11h20" /><circle {...N} cx="17" cy="17" r="6" fill="#1e8b57" /><path stroke="#fff" d="m14 17 2 2 4-4" strokeWidth="2" /></I> },
  { n: "Bluetooth", w: 30, d: <I s={20}><rect {...N} x="3" y="0" width="18" height="24" rx="8.500" fill="#1478d4" /><path stroke="#fff" strokeWidth="1.800" d="m8 8 9 8-4.500 4V4L17 8l-9 8" /></I> },
  { n: "Guard", w: 31, d: <I s={22}><circle {...N} cx="12" cy="12" r="11" fill="#f3c81e" /><path {...N} fill="#2fa13c" d="M1 12a11 11 0 0 1 20-6L3 17zM12 23a11 11 0 0 0 11-9L8 22z" /><circle {...N} cx="12" cy="12" r="6" fill="#f6d93a" /><path stroke="#2b7b2c" strokeWidth="2" d="M12 8v8M8 12h8" /></I> },
  { n: "Wi-Fi", w: 30, d: <I s={20}><path stroke="#8fae8f" strokeWidth="1.500" d="M2 22A20 20 0 0 1 22 2M7 22A15 15 0 0 1 22 7M12 22a10 10 0 0 1 10-10" /><path stroke="#fff" strokeWidth="1.500" d="M16 22a6 6 0 0 1 6-6" /><circle cx="21" cy="21" r="2" fill="#fff" stroke="none" /></I> },
];

const PanelHead = ({ t, menu, launch }: { t: string; menu?: boolean; launch?: boolean }) => (
  <PanelTitle>
    <TitleText>{t}{menu && <Caret />}</TitleText>
    {launch && <Launcher aria-label={`${t} settings`}><LaunchI /></Launcher>}
  </PanelTitle>
);
const Combo = ({ w, v, label, swatch }: { w: number; v: string; label: string; swatch?: boolean }) => (
  <Field $w={w} $swatch={swatch}>
    {swatch && <Swatch />}
    <select aria-label={label} defaultValue={v}><option>{v}</option></select>
    <FieldCaret />
  </Field>
);

export default function App() {
  return (
    <Desktop>
      <Global />
      <Window>
        <Client>
          <TitleBar>
            <AppBadge aria-label="AutoCAD"><BadgeA>A</BadgeA><BadgeCad>CAD</BadgeCad></AppBadge>
            <Slot aria-label="New"><NewIcon /></Slot>
            <Slot aria-label="Open"><OpenIcon /></Slot>
            <Slot aria-label="Save"><SaveIcon /></Slot>
            <Slot aria-label="Save as"><SaveAsIcon /></Slot>
            <Slot aria-label="Open from mobile"><PhoneOpen /></Slot>
            <Slot aria-label="Save to mobile"><PhoneIn /></Slot>
            <Slot aria-label="Plot"><PrintIcon /></Slot>
            <Slot aria-label="Undo"><Undo /></Slot>
            <Slot $w={16} aria-label="Undo list"><Caret $small /></Slot>
            <Slot $w={28} aria-label="Redo"><Undo dull /></Slot>
            <Slot $w={16} aria-label="Redo list"><Caret $small $color="#9a9ea4" /></Slot>
            <Slot $w={22} aria-label="Customize"><Icon width="12" height="12" viewBox="0 0 12 12"><path d="M1 2h10" strokeWidth="2" /><path {...F} d="M1 5h10l-5 6z" /></Icon></Slot>
            <Share><Icon width="20" height="20" viewBox="0 0 20 20"><path {...B} d="M0 11 20 0l-3 18-6-4-4 5-1-7 11-9L4 12z" /></Icon>Share</Share>
            <FileTitle>{"Zeng Y 210512715-ARC1018 Digital Communication-Drawings of  US Embassy in Luanda by Lo..."}</FileTitle>
            <Slot $w={20} aria-label="Expand search"><Icon width="6" height="10" viewBox="0 0 6 10"><path {...F} d="M0 0v10l6-5z" /></Icon></Slot>
            <KeySearch aria-label="Search help" placeholder="Type a keyword or phrase" />
            <Slot aria-label="Search"><Icon width="20" height="22" viewBox="0 0 20 22"><circle cx="9" cy="8" r="7" strokeWidth="1.800" /><path d="m14 14 5 6" stroke="#c79a62" strokeWidth="2.500" /></Icon></Slot>
            <User><Icon width="21" height="22" viewBox="0 0 21 22"><path {...B} d="M10.500 0a5 6 0 0 1 3 11q7 2 7 9v2H.5v-2q0-7 7-9a5 6 0 0 1 3-11z" /></Icon>y.zeng14</User>
            <Caret $small />
            <Slot $w={40} aria-label="Store"><Icon width="17" height="20" viewBox="0 0 17 20"><path d="M0 2h3l3 12h10" strokeWidth="1.600" /><path {...F} d="M4 4h13l-2 7H6zM5 16h3v3H5zM12 16h3v3h-3z" /></Icon></Slot>
            <Slot $w={28} aria-label="Autodesk App Store"><Icon width="22" height="22" viewBox="0 0 22 22"><path d="M11 4 4 18M11 4l7 14M4 18q7-5 14 0" strokeWidth="2.600" /><circle {...F} cx="11" cy="3.500" r="3" /><circle {...F} cx="3.500" cy="18" r="3" /><circle {...F} cx="18.500" cy="18" r="3" /></Icon></Slot>
            <Slot $w={20} aria-label="App list"><Caret $small /></Slot>
            <Rule />
            <Slot $w={42} aria-label="Help"><Icon width="22" height="22" viewBox="0 0 22 22"><circle {...F} cx="11" cy="11" r="10.500" /><text x="11" y="17" fontSize="16" textAnchor="middle" fill="#333" stroke="none">?</text></Icon></Slot>
            <Slot $w={10} aria-label="Help list"><Caret $small /></Slot>
            <TitleGap />
            <Slot aria-label="Minimize"><Icon width="12" height="16" viewBox="0 0 12 16"><path d="M1 14h10" strokeWidth="3" /></Icon></Slot>
            <Slot aria-label="Restore"><Icon width="16" height="16" viewBox="0 0 16 16"><path d="M1 2h14v13H1z" /><path d="M0 2h16" strokeWidth="2.500" /></Icon></Slot>
            <Slot aria-label="Close"><Icon width="14" height="14" viewBox="0 0 14 14"><path d="m1 1 12 12M13 1 1 13" strokeWidth="2" /></Icon></Slot>
          </TitleBar>
          <RibbonTabs>
            {["Home", "Insert", "Annotate", "Parametric", "View", "Manage", "Output", "Add-ins", "Collaborate", "Express Tools", "Featured Apps"].map((t) => (
              <RibbonTab key={t} $on={t === "Annotate"}>{t}</RibbonTab>
            ))}
            <TabMenu aria-label="Ribbon display"><TabMenuBox><Caret $small $up $color="#444" /></TabMenuBox><Caret $small /></TabMenu>
          </RibbonTabs>
          <Ribbon>
            <Panel $w={380}>
              <PanelBody>
                <Big $w={96}><BigA /><BigText $menu>{"Multiline\nText"}<Caret $small /></BigText></Big>
                <Rows>
                  <Row><Tool $w={30} aria-label="Check spelling"><AbcCheck /></Tool><Combo w={251} v="Standard" label="Text style" /></Row>
                  <Row><Tool $w={30} aria-label="Align text"><AlignAB /></Tool><Field $w={251}><input aria-label="Find text" placeholder="Find text" /><FindA /></Field></Row>
                  <Row><Tool $w={30} aria-label="Text height"><BoxA /></Tool><Combo w={251} v="1249.6309" label="Text height" /></Row>
                </Rows>
              </PanelBody>
              <PanelHead t="Text" menu launch />
            </Panel>
            <Panel $w={431}>
              <PanelBody>
                <Big $w={88}><DimBig /><BigText>Dimension</BigText></Big>
                <Rows>
                  <Row>
                    <Combo w={249} v="drawing" label="Dimension style" />
                    <Tool $w={30} aria-label="Break"><BreakI /></Tool><Tool $w={30} aria-label="Adjust space"><AdjustI /></Tool><Tool $w={30} aria-label="Jog line"><JogI /></Tool>
                  </Row>
                  <Row>
                    <Tool $w={26} aria-label="Layers"><Layers /></Tool>
                    <Combo w={223} v="Use Current" label="Dimension layer" swatch />
                    <Tool $w={30} aria-label="Inspect"><UnderDim><path d="m7 15 4 4 6-8" stroke={c.green} strokeWidth="2.600" /></UnderDim></Tool>
                    <Tool $w={30} aria-label="Update"><UnderDim><path d="M7 15a5 5 0 0 1 9-2m1-4v5h-5M17 17a5 5 0 0 1-9 2m-1 4v-5h5" stroke={c.green} strokeWidth="1.800" /></UnderDim></Tool>
                    <Tool $w={30} aria-label="Reassociate"><UnderDim><path d="M12 16c-2-3-6-3-6 0s4 3 6 0 6-3 6 0-4 3-6 0z" stroke="#d0a58a" /></UnderDim></Tool>
                  </Row>
                  <Row>
                    <Tool><LinearI />Linear</Tool><Tool $w={22} aria-label="Linear list"><Caret $small /></Tool>
                    <Tool><QuickI />Quick</Tool>
                    <Tool><ContinueI />Continue</Tool><Tool $w={22} aria-label="Continue list"><Caret $small /></Tool>
                  </Row>
                </Rows>
              </PanelBody>
              <PanelHead t="Dimensions" menu launch />
            </Panel>
            <Panel $w={144}>
              <PanelBody>
                <Big $w={60}><CenterMarkI /><BigText>{"Center\nMark"}</BigText></Big>
                <Big $w={80}><CenterlineI /><BigText>Centerline</BigText></Big>
              </PanelBody>
              <PanelHead t="Centerlines" />
            </Panel>
            <Panel $w={349}>
              <PanelBody>
                <Big $w={97}><MultiI /><BigText>Multileader</BigText></Big>
                <Rows>
                  <Row><Combo w={249} v="Standard" label="Multileader style" /></Row>
                  <Row><Tool $w={28} aria-label="Align leaders"><LeadAlign /></Tool><Tool><LeadAdd />Add Leader</Tool></Row>
                  <Row><Tool $w={28} aria-label="Collect leaders"><LeadCollect /></Tool><Tool><LeadAdd del />Remove Leader</Tool></Row>
                </Rows>
              </PanelBody>
              <PanelHead t="Leaders" launch />
            </Panel>
            <Panel $w={305}>
              <PanelBody>
                <Big $w={53}><TableI /><BigText>Table</BigText></Big>
                <Rows>
                  <Row><Combo w={249} v="Standard" label="Table style" /></Row>
                  <Row><Tool $w={28} aria-label="Download from source"><SheetI /></Tool><Tool><ExtractI />Extract Data</Tool></Row>
                  <Row><Tool $w={28} aria-label="Upload to source"><SheetI up /></Tool><Tool><LinkDataI />Link Data</Tool></Row>
                </Rows>
              </PanelBody>
              <PanelHead t="Tables" launch />
            </Panel>
            <Panel $w={164}>
              <PanelBody>
                <Big $w={74}><WipeI /><BigText>Wipeout</BigText></Big>
                <Big $w={88}><CloudI /><BigText $menu>{"Revision\nCloud"}<Caret $small /></BigText></Big>
              </PanelBody>
              <PanelHead t="Markup" />
            </Panel>
            <Panel $w={160}>
              <PanelBody>
                <Big $w={132}>
                  <AScale s={40} extra={<path d="M19 0v11M13 5h11" stroke={c.green} strokeWidth="3.400" />} />
                  <BigText $menu>{"Add\nCurrent Scale"}<Caret $small /></BigText>
                </Big>
              </PanelBody>
              <PanelHead t="Annotation Scaling" />
            </Panel>
          </Ribbon>
          <Strip $h={33} aria-label="Drawings">
            <Slash />
            <StripTab>Start</StripTab>
            <StripTab $on>Zeng Y 210512715...e Kahn-May 2023*<Icon width="11" height="11" viewBox="0 0 11 11"><path d="m1 1 9 9M10 1l-9 9" strokeWidth="2" stroke="#aab0b8" /></Icon></StripTab>
            <StripTab aria-label="New drawing"><PlusI /></StripTab>
            <Slash />
          </Strip>
          <Band $h={5} />
          <Canvas>
            <Drawing />
            <ViewLabel>[−][Top][2D Wireframe]</ViewLabel>
            <ViewButtons>
              <Slot $w={25} aria-label="Minimize view"><Icon width="13" height="12" viewBox="0 0 13 12"><path d="M0 9h13" stroke="#fff" strokeWidth="3" /></Icon></Slot>
              <Slot $w={25} aria-label="Restore view"><Icon width="13" height="13" viewBox="0 0 13 13"><path d="M1.500 4.500h7v7h-7z" stroke="#fff" strokeWidth="2.500" /><path d="M4 1h8v8" stroke="#fff" strokeWidth="1.800" /></Icon></Slot>
              <Slot $w={25} aria-label="Close view"><Icon width="11" height="12" viewBox="0 0 11 12"><path d="m1 1 9 10M10 1 1 11" stroke="#fff" strokeWidth="3" /></Icon></Slot>
            </ViewButtons>
            <ViewCube><Compass /></ViewCube>
            <Wcs>WCS<Icon width="10" height="8" viewBox="0 0 10 8"><path d="M1 1h8L5 6z" stroke="#8b8f98" strokeWidth="1" /></Icon></Wcs>
            <NavBar><NavIcons /></NavBar>
            <CommandLine>
              <CommandTools>
                <Slot $w={16} aria-label="Move"><Icon width="8" height="22" viewBox="0 0 8 22"><path d="M1.500 0v22M6.500 0v22" strokeWidth="2" strokeDasharray="2 2" /></Icon></Slot>
                <Slot $w={20} aria-label="Close command line"><Icon width="12" height="12" viewBox="0 0 12 12"><path d="m1 1 10 10M11 1 1 11" strokeWidth="2.400" stroke="#b9bbbe" /></Icon></Slot>
                <Slot $w={36} aria-label="Customize command line"><Icon width="20" height="20" viewBox="0 0 20 20"><path d="M2 18 12 8" strokeWidth="4" stroke="#b9bbbe" /><path d="M14 1a5 5 0 0 0-4 7l3 3a5 5 0 0 0 6-6l-4 3-2-2z" fill="#b9bbbe" stroke="none" /></Icon></Slot>
              </CommandTools>
              <CommandField>
                <Icon width="20" height="16" viewBox="0 0 20 16"><path d="M1 1h18v14H1z" stroke="#50545a" /><path d="M1 3h18" stroke="#50545a" strokeWidth="3" /><path d="m3 7 2 2-2 2M7 12h4" stroke="#50545a" /></Icon>
                <Caret $color="#50545a" />
                <input aria-label="Command" placeholder="Type a command" />
                <Caret $up $color="#50545a" />
              </CommandField>
            </CommandLine>
            <GuideOverlay />
          </Canvas>
          <Band $h={6} />
          <Strip $h={37} aria-label="Layouts">
            <StripTab $on $bottom>Model</StripTab>
            <StripTab $bottom>Layout1</StripTab><Slash />
            <StripTab $bottom>Layout2</StripTab><Slash />
            <StripTab $bottom aria-label="New layout"><PlusI /></StripTab><Slash />
          </Strip>
          <Status>
            <StatusFill />
            <Group><SBtn $w={58}>MODEL</SBtn></Group>
            <Group>
              <SBtn $w={28} $on aria-label="Grid"><I s={20}><path d="M6 1v22M12 1v22M18 1v22M1 6h22M1 12h22M1 18h22" stroke="#fff" strokeWidth="1.800" /></I></SBtn>
              <SBtn $w={30} aria-label="Snap"><I s={20}><path d="M4 3v20M12 3v20M20 3v20" strokeWidth="3" strokeDasharray="3 4" /></I></SBtn>
              <SBtn $w={20} aria-label="Snap list"><Caret /></SBtn>
            </Group>
            <Group>
              <SBtn $w={28} $on aria-label="Ortho"><I s={22}><path d="M3 1v21h20M3 15h6v7" stroke="#fff" strokeWidth="1.800" /></I></SBtn>
              <SBtn $w={32} aria-label="Polar"><I s={22}><circle cx="11" cy="12" r="8" /><path d="M11 12h12M11 12 20 2M17 8v9" /></I></SBtn>
              <SBtn $w={18} aria-label="Polar list"><Caret /></SBtn>
              <SBtn $w={32} aria-label="Isometric"><I s={22}><path d="m2 2 18 19" stroke="#c2685f" /><path d="M12 0v24" stroke={c.green} /><path d="M10 12h4v4h-4z" /></I></SBtn>
              <SBtn $w={20} aria-label="Isometric list"><Caret /></SBtn>
              <SBtn $w={32} aria-label="Object tracking"><I s={22}><path d="M2 22h21M2 22 18 4" /><path {...F} d="M8 13h4v4H8z" /></I></SBtn>
              <SBtn $w={28} $on aria-label="Object snap"><I s={22}><path d="M5 6h17v17H5z" stroke="#fff" /><path d="M1 2h6v6H1z" fill="#5b8bc0" stroke="#fff" /></I></SBtn>
              <SBtn $w={20} aria-label="Object snap list"><Caret /></SBtn>
            </Group>
            <Group>
              <SBtn $w={28} $on aria-label="Annotation visibility"><AScale s={22} extra={<circle cx="20" cy="5" r="3" />} /></SBtn>
              <SBtn $w={30} aria-label="Auto scale"><AScale s={22} extra={<path {...F} d="m21 1-5 6h3l-1 5 5-6h-3z" />} /></SBtn>
              <SBtn $w={30} aria-label="Annotation scale"><AScale s={22} /></SBtn>
              <SBtn $w={42}>1:1<Caret /></SBtn>
            </Group>
            <Group>
              <SBtn $w={28} aria-label="Workspace"><I s={22}><circle cx="12" cy="12" r="6" strokeWidth="4.500" /><circle cx="12" cy="12" r="10" strokeWidth="3.500" strokeDasharray="4 3.850" /></I></SBtn>
              <SBtn $w={22} aria-label="Workspace list"><Caret /></SBtn>
              <SBtn $w={28} aria-label="Monitor"><PlusI /></SBtn>
            </Group>
            <Group><SBtn $w={28} aria-label="Isolate objects"><I s={22}><path d="M2 2h8v8H2zM10 14l5 9H5z" /><circle cx="18" cy="12" r="4" /></I></SBtn></Group>
            <Group><SBtn $w={32} aria-label="Hardware acceleration"><I s={26}><circle {...N} cx="13" cy="11" r="9" fill="#3f7fd0" /><path d="M6 0v12M1 5h11" stroke="#e5f0fb" /><path {...N} fill="#f2b04a" d="M1 13h8v8H1z" /><path d="m11 17 4 5 8-10" stroke="#4fc04a" strokeWidth="3" /></I></SBtn></Group>
            <Group>
              <SBtn $w={32} aria-label="Clean screen"><I s={20}><path d="M1 3h22v18H1zM5 13v4h5M14 7h5v4M5 17l4-4M19 7l-4 4" /></I></SBtn>
              <SBtn $w={30} aria-label="Customization"><I s={22}><path d="M1 4h23M1 12h23M1 20h23" strokeWidth="2.600" /></I></SBtn>
            </Group>
          </Status>
        </Client>
      </Window>
      <Meter><MeterFill /></Meter>
      <Taskbar>
        {apps.map((a) => <TaskApp key={a.n} $run={a.run} $on={a.on} aria-label={a.n}>{a.d}</TaskApp>)}
        <Tray>
          {tray.map((t) => <TrayBtn key={t.n} $w={t.w} aria-label={t.n}>{t.d}</TrayBtn>)}
          <TrayBtn $w={28}>英</TrayBtn>
          <Clock>22:21 周三<br />2023/5/10</Clock>
          <TrayBtn $w={50} aria-label="Player"><I s={20}><path d="M1 1h22v22H1z" stroke="#fff" strokeWidth="1.800" /><path {...N} fill="#fff" d="M10 7v10l6-5z" /></I></TrayBtn>
          <TrayBtn $w={50} aria-label="Notifications"><I s={22}><path {...N} fill="#fff" d="M1 1h22v18H16l-4 5-4-5H1z" /><path d="M5 6h14M5 10h14M5 14h9" stroke={c.task} strokeWidth="1.800" /></I></TrayBtn>
        </Tray>
      </Taskbar>
    </Desktop>
  );
}
